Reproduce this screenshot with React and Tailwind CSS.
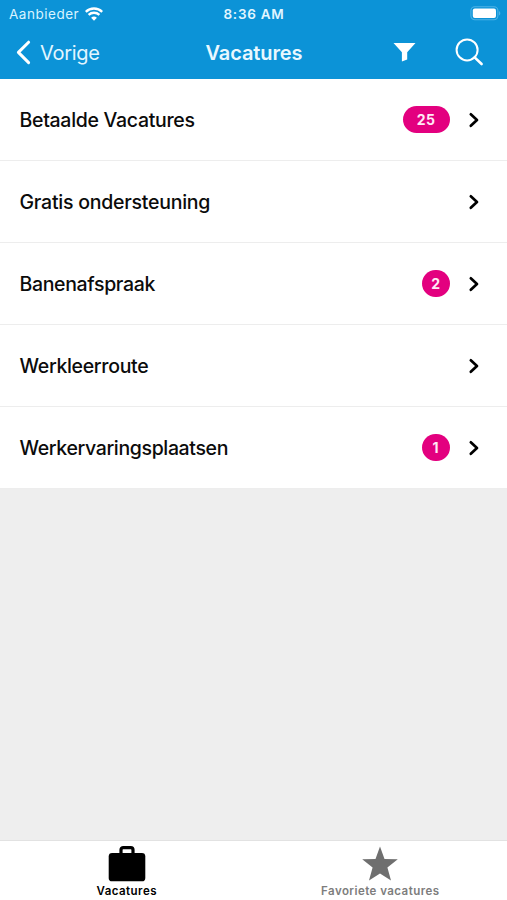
const rows = [
  { label: 'Betaalde Vacatures', count: 25, tracking: 'tracking-[-0.3px]' },
  { label: 'Gratis ondersteuning', tracking: 'tracking-[-0.24px]' },
  { label: 'Banenafspraak', count: 2, tracking: 'tracking-[-0.34px]' },
  { label: 'Werkleerroute', tracking: 'tracking-[-0.32px]' },
  { label: 'Werkervaringsplaatsen', count: 1, tracking: 'tracking-[-0.36px]' },
];

function StatusBar() {
  return (
    <div className="grid h-[27px] grid-cols-3 items-center text-[13.5px] leading-none">
      <div className="flex items-center gap-[6px] pl-[9px] text-[#d9f3ff]">
        <span className="pt-[2px] tracking-[0.52px]">Aanbieder</span>
        <svg width="18" height="14" viewBox="0 0 18 14" fill="none" stroke="white" strokeWidth="2.3">
          <path d="M0.8 4.8a11.8 11.8 0 0 1 16.4 0" />
          <path d="M3.6 7.9a7.8 7.8 0 0 1 10.8 0" />
          <path d="M9 13.8 6.1 10.8a4.2 4.2 0 0 1 5.8 0Z" fill="white" stroke="none" />
        </svg>
      </div>
      <div className="pl-px pt-[2px] text-center font-semibold tracking-[0.75px] text-[#e2f6ff]">8:36 AM</div>
      <div className="flex justify-end pr-[6px]">
        <svg width="31" height="15" viewBox="0 0 31 15">
          <rect x="0.9" y="0.8" width="27" height="13" rx="4" fill="none" stroke="#4db3e6" strokeWidth="1.1" />
          <rect x="2.8" y="2.6" width="23.2" height="9.4" rx="2" fill="white" />
          <path d="M29 5v4.6c1.8-.8 1.8-3.8 0-4.6Z" fill="#4db3e6" />
        </svg>
      </div>
    </div>
  );
}

function NavBar() {
  return (
    <div className="flex h-[52px] items-center pb-[2px]">
      <div className="flex w-[169px] items-center gap-[9px] pl-[16px]">
        <svg width="15" height="25" viewBox="0 0 15 25" fill="none" stroke="white" strokeWidth="3" strokeLinecap="round" strokeLinejoin="round">
          <path d="M12.6 2.2 2.4 12.4 12.6 22.6" />
        </svg>
        <span className="pt-px text-[20px] leading-none tracking-[-0.3px] text-[#e2f6ff]">Vorige</span>
      </div>
      <h1 className="w-[170px] pt-px text-center text-[20px] font-semibold leading-none tracking-[-0.1px] text-[#e9f8ff]">Vacatures</h1>
      <div className="flex flex-1 items-center justify-end gap-[38px] pr-[23px]">
        <svg width="23" height="20" viewBox="0 0 23 20" fill="white">
          <path d="M0.5 1h22L14.2 10.2v7.2L8.900 19.6v-9.4Z" />
        </svg>
        <svg width="30" height="30" viewBox="0 0 30 30" fill="none" stroke="white" strokeWidth="2" strokeLinecap="round">
          <circle cx="13.1" cy="12.9" r="10.5" />
          <path d="m20.6 20.4 7 6.6" strokeWidth="2.6" />
        </svg>
      </div>
    </div>
  );
}

function Row({ label, count, tracking }) {
  return (
    <li className="flex h-[82px] items-center border-b border-[#ededed] bg-white pl-[19.5px] pr-[27px]">
      <span className={`flex-1 whitespace-nowrap pt-[3px] text-[19.5px] font-medium text-[#0b0b0b] ${tracking}`}>{label}</span>
      {count && (
        <span className={`flex h-[27.5px] items-center justify-center rounded-full bg-[#e3007f] pt-px text-[14px] font-bold leading-none tracking-[0.4px] text-[#ffeaf5] ${count > 9 ? 'w-[47px]' : 'w-[27.5px]'}`}>
          {count}
        </span>
      )}
      <svg className="ml-[18.5px]" width="12" height="16" viewBox="0 0 12 16" fill="none" stroke="black" strokeWidth="2.7" strokeLinecap="round" strokeLinejoin="round">
        <path d="M2.8 2.3 9 8l-6.2 5.8" />
      </svg>
    </li>
  );
}

export default function App() {
  return (
    <div className="flex h-[900px] w-[507px] flex-col overflow-hidden bg-[#eeeeee] font-['Inter','Liberation_Sans',sans-serif]">
      <header className="h-[79px] bg-[#0c93d7]">
        <StatusBar />
        <NavBar />
      </header>
      <ul className="flex-1">
        {rows.map((row) => (
          <Row key={row.label} {...row} />
        ))}
      </ul>
      <nav className="grid h-[60px] grid-cols-2 border-t border-[#e2e2e2] bg-white text-[11.5px] font-semibold leading-none">
        <div className="flex flex-col items-center pt-[5px] text-black">
          <svg width="38" height="36" viewBox="0 0 38 36">
            <path d="M13 8V3.8A2.2 2.2 0 0 1 15.2 1.6h7.6A2.2 2.2 0 0 1 25 3.8V8" fill="none" stroke="black" strokeWidth="3.2" />
            <rect x="0.7" y="7" width="36.6" height="28.3" rx="3.4" fill="black" />
          </svg>
          <span className="mt-[4px] tracking-[0.45px]">Vacatures</span>
        </div>
        <div className="flex flex-col items-center pt-[5px] text-[#7d7d7d]">
          <svg width="38" height="36" viewBox="0 0 38 36" fill="#6f6f6f">
            <path d="M19 0.6 23.5 13 36.8 13.3 26.4 21.6 30 34.6 19 27.6 8 34.6 11.6 21.6 1.2 13.3 14.5 13Z" />
          </svg>
          <span className="mt-[4px] tracking-[0.45px]">Favoriete vacatures</span>
        </div>
      </nav>
    </div>
  );
}
